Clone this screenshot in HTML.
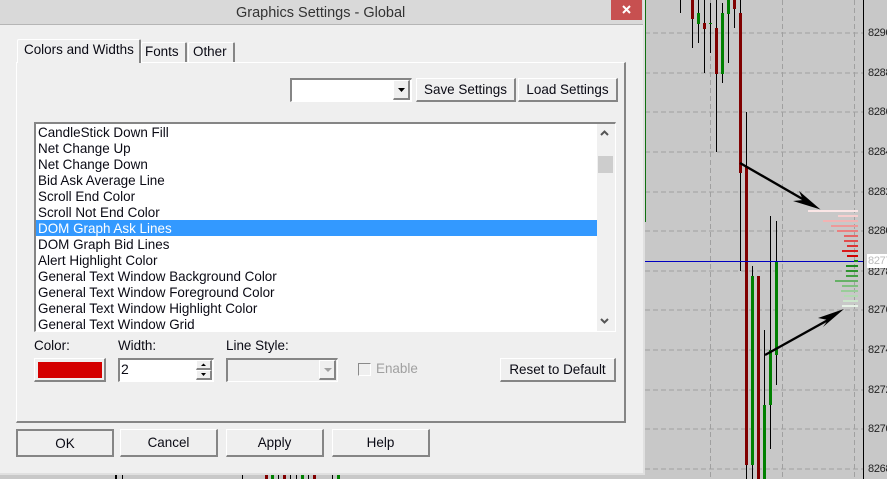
<!DOCTYPE html>
<html><head><meta charset="utf-8"><style>
html,body{margin:0;padding:0;background:#c8c8c8}
#r{position:relative;width:887px;height:479px;overflow:hidden;background:#c8c8c8;font-family:"Liberation Sans",sans-serif;font-size:13.45px;color:#0a0a14}
#r div{position:absolute;box-sizing:border-box}
.t{white-space:nowrap;line-height:16px}
.b{background:#efefef;border-top:1px solid #fff;border-left:1px solid #fff;border-right:2px solid #858585;border-bottom:2px solid #858585;text-align:center;white-space:nowrap}
.i{border-top:2px solid #858585;border-left:2px solid #858585;border-right:1px solid #fff;border-bottom:1px solid #fff}
.a{color:#222;font-size:11px;letter-spacing:-.3px;line-height:14px;left:868px;white-space:nowrap}
</style></head><body><div id="r">
<svg width="887" height="479" style="position:absolute;left:0;top:0" shape-rendering="crispEdges">
<g stroke="#a0a0a0" stroke-width="1" stroke-dasharray="5 3" fill="none">
<path d="M645 33H863M645 73H863M645 112H863M645 152H863M645 192H863M645 231H863M645 271H863M645 310H863M645 350H863M645 390H863M645 429H863M645 469H863"/>
<path d="M710.5 0V479M782.5 0V479M854.5 0V479"/>
</g>
<g stroke="#000" stroke-width="1">
<path d="M680.5 0V13M692.5 0V48M698.5 0V43M704.5 0V73M710.5 3V53M716.5 0V152M722.5 3V83M728.5 0V63M734.5 0V28M740.5 0V271M746.5 112V479M752.5 266V479M764.5 330V405M770.5 216V449M776.5 221V385"/>
<path d="M242.5 475V479M278.5 475V479M290.5 475V479M296.5 475V479M308.5 475V479M332.5 475V479M115.5 475V479M116.5 475V479M122.5 475V479"/>
</g>
<g fill="#800000">
<rect x="691" y="0" width="3" height="19"/><rect x="703" y="23" width="3" height="6"/><rect x="715" y="28" width="3" height="46"/><rect x="733" y="0" width="3" height="9"/><rect x="739" y="13" width="3" height="160"/><rect x="745" y="167" width="3" height="298"/><rect x="757" y="276" width="3" height="203"/>
<rect x="265" y="475" width="3" height="4"/><rect x="283" y="475" width="3" height="4"/><rect x="313" y="475" width="3" height="4"/>
</g>
<g fill="#008000">
<rect x="697" y="13" width="3" height="11"/><rect x="709" y="23" width="3" height="1"/><rect x="721" y="13" width="3" height="61"/><rect x="727" y="0" width="3" height="14"/><rect x="751" y="276" width="3" height="189"/><rect x="763" y="405" width="3" height="74"/><rect x="769" y="350" width="3" height="55"/><rect x="775" y="261" width="3" height="94"/>
<rect x="271" y="475" width="3" height="4"/><rect x="301" y="475" width="3" height="4"/><rect x="337" y="475" width="3" height="4"/>
</g>
<rect x="645" y="0" width="1" height="222" fill="#107010"/>
<rect x="863" y="0" width="1" height="479" fill="#000"/>
<rect x="645" y="261" width="218" height="1" fill="#0000c0"/>
<g>
<rect x="808" y="210" width="50" height="2" fill="#fbe6e6"/><rect x="838" y="215" width="20" height="2" fill="#f7cfcf"/><rect x="823" y="220" width="35" height="2" fill="#f2b3b3"/><rect x="831" y="225" width="27" height="2" fill="#ee9999"/><rect x="837" y="230" width="21" height="2" fill="#ea8080"/><rect x="844" y="235" width="14" height="2" fill="#e56666"/><rect x="844" y="240" width="14" height="2" fill="#e04d4d"/><rect x="847" y="245" width="11" height="2" fill="#dc3333"/><rect x="842" y="250" width="16" height="2" fill="#d81a1a"/><rect x="847" y="255" width="11" height="2" fill="#d00000"/>
<rect x="854" y="260" width="4" height="2" fill="#118811"/><rect x="846" y="265" width="12" height="2" fill="#1d8a1d"/><rect x="846" y="270" width="12" height="2" fill="#2f932f"/><rect x="846" y="275" width="12" height="2" fill="#449f44"/><rect x="835" y="280" width="23" height="2" fill="#66b066"/><rect x="842" y="285" width="16" height="2" fill="#80bf80"/><rect x="841" y="290" width="17" height="2" fill="#99cc99"/><rect x="844" y="295" width="14" height="2" fill="#b3d9b3"/><rect x="843" y="300" width="15" height="2" fill="#cce6cc"/><rect x="842" y="305" width="16" height="2" fill="#e6f2e6"/>
</g>
<g shape-rendering="auto">
<path d="M740 163L806 201" stroke="#000" stroke-width="2.4" fill="none"/>
<path d="M820.5 209.5L799 191L803 200L793 201Z" fill="#000"/>
<path d="M765 355L828 320" stroke="#000" stroke-width="2.4" fill="none"/>
<path d="M844 309L818 318L828 320L823 327Z" fill="#000"/>
</g>
</svg>
<div class="a" style="top:26px">8290</div><div class="a" style="top:66px">8288</div><div class="a" style="top:105px">8286</div><div class="a" style="top:145px">8284</div><div class="a" style="top:185px">8282</div><div class="a" style="top:224px">8280</div><div class="a" style="top:265px">8278</div><div class="a" style="top:303px">8276</div><div class="a" style="top:343px">8274</div><div class="a" style="top:383px">8272</div><div class="a" style="top:422px">8270</div><div class="a" style="top:462px">8268</div>
<div class="a" style="left:867px;top:254px;width:20px;height:14px;background:#fff;color:#bbb;text-indent:1px">8277</div>

<!-- dialog -->
<div style="left:0;top:0;width:645px;height:475px;background:#e0e0e0"></div>
<div style="left:0;top:0;width:643px;height:473px;background:#efefef"></div>
<div style="left:0;top:0;width:643px;height:25px;background:#d9d9d9;border-bottom:1px solid #b5b5b5"></div>
<div class="t" style="left:236px;top:5px;font-size:14.5px;color:#333">Graphics Settings - Global</div>
<div style="left:611px;top:0;width:31px;height:20px;background:#c75050"></div>
<svg width="10" height="10" style="position:absolute;left:622px;top:5px"><path d="M1 1L8 8M8 1L1 8" stroke="#fff" stroke-width="2"/></svg>

<!-- tab panel -->
<div style="left:16px;top:62px;width:610px;height:361px;border-top:1px solid #fff;border-left:1px solid #fff;border-right:2px solid #858585;border-bottom:2px solid #858585"></div>
<div style="left:17px;top:39px;width:124px;height:24px;background:#efefef;border-top:1px solid #fff;border-left:1px solid #fff;border-right:2px solid #858585;border-radius:2px 2px 0 0"></div>
<div class="t" style="left:24px;top:42px">Colors and Widths</div>
<div style="left:141px;top:42px;width:46px;height:20px;background:#efefef;border-top:1px solid #fff;border-left:1px solid #fff;border-right:2px solid #858585;border-radius:2px 2px 0 0"></div>
<div class="t" style="left:145px;top:44px">Fonts</div>
<div style="left:188px;top:42px;width:47px;height:20px;background:#efefef;border-top:1px solid #fff;border-left:1px solid #fff;border-right:2px solid #858585;border-radius:2px 2px 0 0"></div>
<div class="t" style="left:193px;top:44px">Other</div>

<!-- combo -->
<div class="i" style="left:290px;top:78px;width:122px;height:24px;background:#fff"></div>
<div class="b" style="left:393px;top:80px;width:17px;height:20px"></div>
<svg width="10" height="6" style="position:absolute;left:397px;top:87px"><path d="M1 1H8L4.5 5Z" fill="#000"/></svg>
<div class="b t" style="left:416px;top:78px;width:100px;height:24px;line-height:21px">Save Settings</div>
<div class="b t" style="left:518px;top:78px;width:100px;height:24px;line-height:21px">Load Settings</div>

<!-- list -->
<div class="i" style="left:34px;top:122px;width:582px;height:210px;background:#fff;overflow:hidden"></div>
<div style="left:36px;top:124px;width:579px;height:207px;overflow:hidden">
<div style="left:0;top:96px;width:561px;height:16px;background:#3399ff"></div>
<div class="t" style="left:2px;top:1px">CandleStick Down Fill</div>
<div class="t" style="left:2px;top:17px">Net Change Up</div>
<div class="t" style="left:2px;top:33px">Net Change Down</div>
<div class="t" style="left:2px;top:49px">Bid Ask Average Line</div>
<div class="t" style="left:2px;top:65px">Scroll End Color</div>
<div class="t" style="left:2px;top:81px">Scroll Not End Color</div>
<div class="t" style="left:2px;top:97px;color:#fff">DOM Graph Ask Lines</div>
<div class="t" style="left:2px;top:113px">DOM Graph Bid Lines</div>
<div class="t" style="left:2px;top:129px">Alert Highlight Color</div>
<div class="t" style="left:2px;top:145px">General Text Window Background Color</div>
<div class="t" style="left:2px;top:161px">General Text Window Foreground Color</div>
<div class="t" style="left:2px;top:177px">General Text Window Highlight Color</div>
<div class="t" style="left:2px;top:193px">General Text Window Grid</div>
<div style="left:561px;top:0;width:18px;height:207px;background:#f0f0f0"></div>
<div style="left:562px;top:32px;width:15px;height:17px;background:#cdcdcd"></div>
</div>
<svg width="10" height="6" style="position:absolute;left:600px;top:130px"><path d="M1 5L4.5 1.5L8 5" stroke="#555" stroke-width="2" fill="none"/></svg>
<svg width="10" height="6" style="position:absolute;left:600px;top:318px"><path d="M1 1L4.5 4.5L8 1" stroke="#555" stroke-width="2" fill="none"/></svg>

<!-- bottom row -->
<div class="t" style="left:34px;top:338px">Color:</div>
<div class="t" style="left:118px;top:338px">Width:</div>
<div class="t" style="left:226px;top:338px">Line Style:</div>
<div class="b" style="left:34px;top:358px;width:72px;height:24px"></div>
<div style="left:38px;top:362px;width:64px;height:16px;background:#d40000"></div>
<div class="i" style="left:118px;top:358px;width:96px;height:24px;background:#fff"></div>
<div class="t" style="left:121px;top:361px;font-size:14px">2</div>
<div class="b" style="left:196px;top:360px;width:16px;height:10px"></div>
<div class="b" style="left:196px;top:370px;width:16px;height:10px"></div>
<svg width="6" height="4" style="position:absolute;left:201px;top:363px"><path d="M0 3H5L2.5 .5Z" fill="#000"/></svg>
<svg width="6" height="4" style="position:absolute;left:201px;top:373px"><path d="M0 0H5L2.5 3Z" fill="#000"/></svg>
<div class="i" style="left:226px;top:358px;width:112px;height:24px;background:#efefef"></div>
<div class="b" style="left:319px;top:360px;width:17px;height:20px"></div>
<svg width="10" height="6" style="position:absolute;left:323px;top:367px"><path d="M1 1H9L5 5Z" fill="#a0a0a0"/></svg>
<div style="left:358px;top:363px;width:13px;height:13px;border-top:1px solid #8a8a8a;border-left:1px solid #8a8a8a;border-right:1px solid #fff;border-bottom:1px solid #fff"></div>
<div class="t" style="left:376px;top:361px;color:#a0a0a0">Enable</div>
<div class="b t" style="left:500px;top:358px;width:116px;height:24px;line-height:21px">Reset to Default</div>

<div class="b t" style="left:16px;top:429px;width:98px;height:28px;line-height:25px;border:2px solid #858585">OK</div>
<div class="b t" style="left:120px;top:429px;width:98px;height:28px;line-height:25px">Cancel</div>
<div class="b t" style="left:226px;top:429px;width:98px;height:28px;line-height:25px">Apply</div>
<div class="b t" style="left:332px;top:429px;width:98px;height:28px;line-height:25px">Help</div>
</div></body></html>
